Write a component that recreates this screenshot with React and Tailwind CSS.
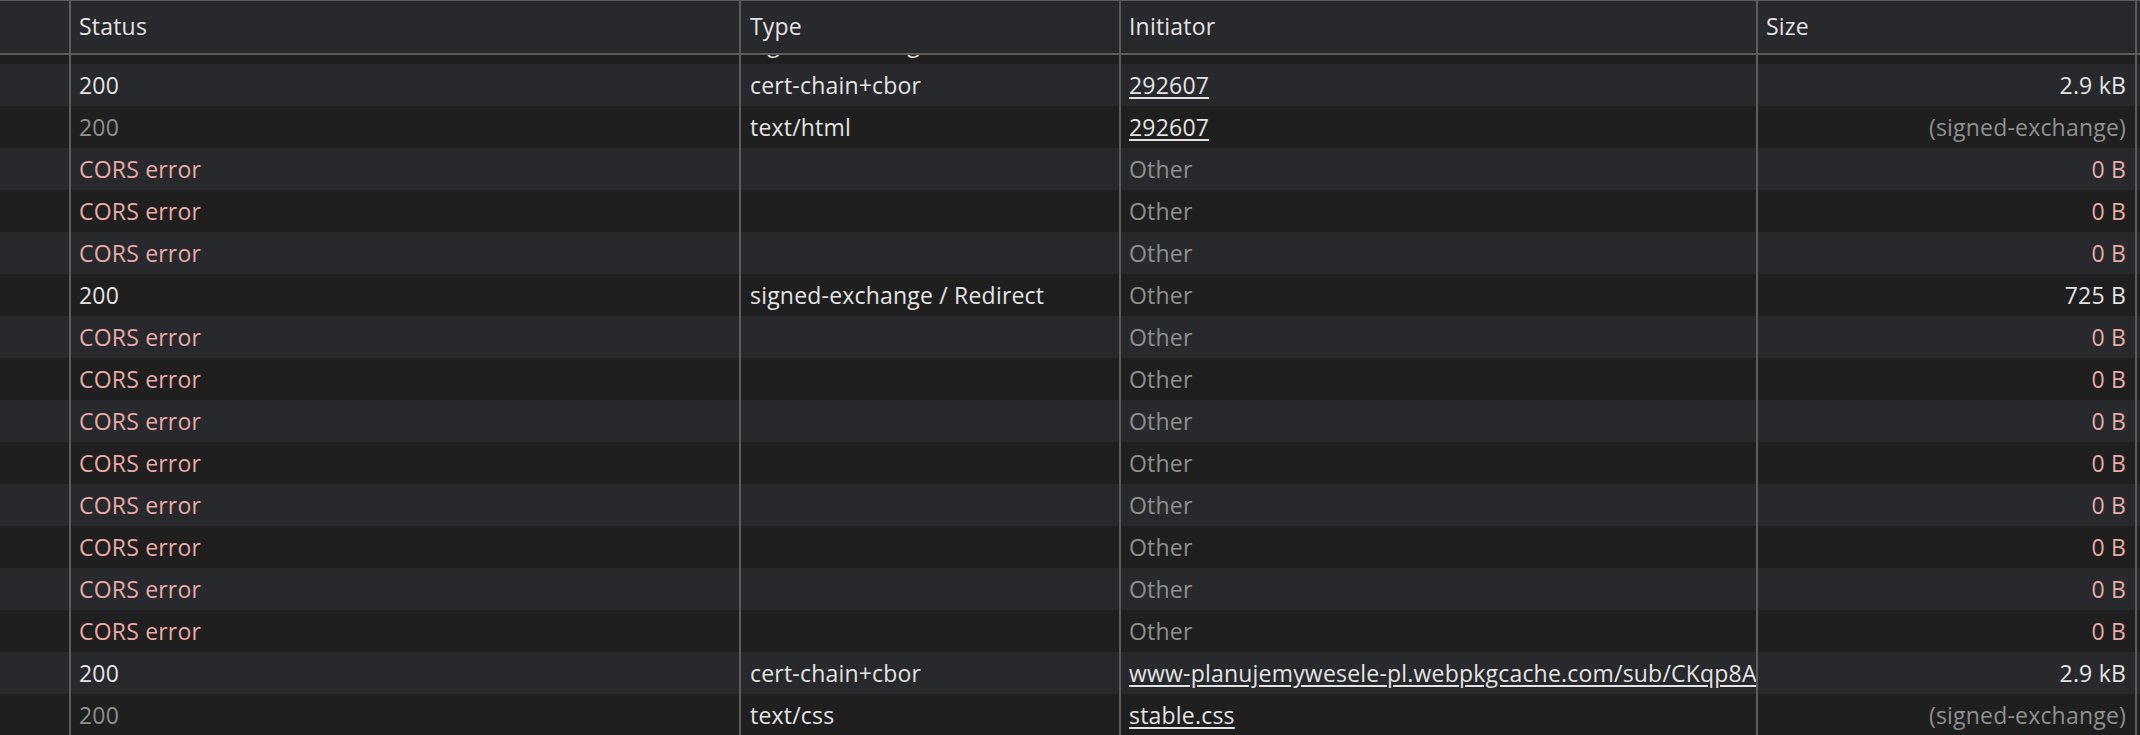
import React from 'react';

const WHITE = 'text-[#e3e3e3]';
const DIM = 'text-[#8f8f8f]';
const PINK = 'text-[#e9a9a5]';

const cors = { status: 'CORS error', statusC: PINK, type: '', init: 'Other', initC: DIM, size: '0 B', sizeC: PINK };

const rows = [
  { status: '200', statusC: WHITE, type: 'signed-exchange', init: '', size: '' },
  { status: '200', statusC: WHITE, type: 'cert-chain+cbor', init: '292607', link: true, size: '2.9 kB', sizeC: WHITE },
  { status: '200', statusC: DIM, type: 'text/html', init: '292607', link: true, size: '(signed-exchange)', sizeC: DIM },
  cors,
  cors,
  cors,
  { status: '200', statusC: WHITE, type: 'signed-exchange / Redirect', init: 'Other', initC: DIM, size: '725 B', sizeC: WHITE },
  cors,
  cors,
  cors,
  cors,
  cors,
  cors,
  cors,
  cors,
  {
    status: '200',
    statusC: WHITE,
    type: 'cert-chain+cbor',
    init: 'www-planujemywesele-pl.webpkgcache.com/sub/CKqp8AXbVr2Zq1/s/www.planujemywesele.pl/',
    link: true,
    size: '2.9 kB',
    sizeC: WHITE,
  },
  { status: '200', statusC: DIM, type: 'text/css', init: 'stable.css', link: true, size: '(signed-exchange)', sizeC: DIM },
];

const Row = ({ r, shade }) => (
  <div className={`flex h-[42px] items-center ${shade ? 'bg-[#28292c]' : 'bg-[#1f1f1f]'}`}>
    <div className="w-[69px] h-full" />
    <div className={`w-[670px] h-full flex items-center pl-[8px] border-l-2 border-[#5c5c5c] ${r.statusC}`}>{r.status}</div>
    <div className="w-[380px] h-full flex items-center pl-[9px] border-l-2 border-[#5c5c5c] text-[#e3e3e3] whitespace-nowrap">{r.type}</div>
    <div className={`w-[637px] h-full flex items-center pl-[8px] border-l-2 border-[#5c5c5c] overflow-hidden whitespace-nowrap ${r.link ? 'text-[#e3e3e3] underline underline-offset-[3px]' : r.initC}`}>
      {r.init}
    </div>
    <div className={`w-[381px] h-full flex items-center justify-end pr-[9px] border-l-2 border-r-2 border-[#5c5c5c] whitespace-nowrap ${r.sizeC}`}>{r.size}</div>
  </div>
);

const App = () => {
  return (
    <div className="w-[2140px] h-[735px] overflow-hidden bg-[#1f1f1f] text-[23px] tracking-[0.2px] font-['Open_Sans',sans-serif] leading-none">
      {/* Header */}
      <div className="flex h-[55px] bg-[#28292c] border-t border-b-2 border-[#5c5c5c] text-[#e3e3e3]">
        <div className="w-[69px]" />
        <div className="w-[670px] flex items-center pl-[8px] pb-[2px] border-l-2 border-[#5c5c5c]">Status</div>
        <div className="w-[380px] flex items-center pl-[9px] pb-[2px] border-l-2 border-[#5c5c5c]">Type</div>
        <div className="w-[637px] flex items-center pl-[8px] pb-[2px] border-l-2 border-[#5c5c5c]">Initiator</div>
        <div className="w-[381px] flex items-center pl-[8px] pb-[2px] border-l-2 border-r-2 border-[#5c5c5c]">Size</div>
      </div>

      {/* Body, scrolled a little */}
      <div className="h-[680px] overflow-hidden">
        <div className="-mt-[33px]">
          {rows.map((r, i) => (
            <Row key={i} r={r} shade={i % 2 === 1} />
          ))}
        </div>
      </div>
    </div>
  );
};

export default App;
